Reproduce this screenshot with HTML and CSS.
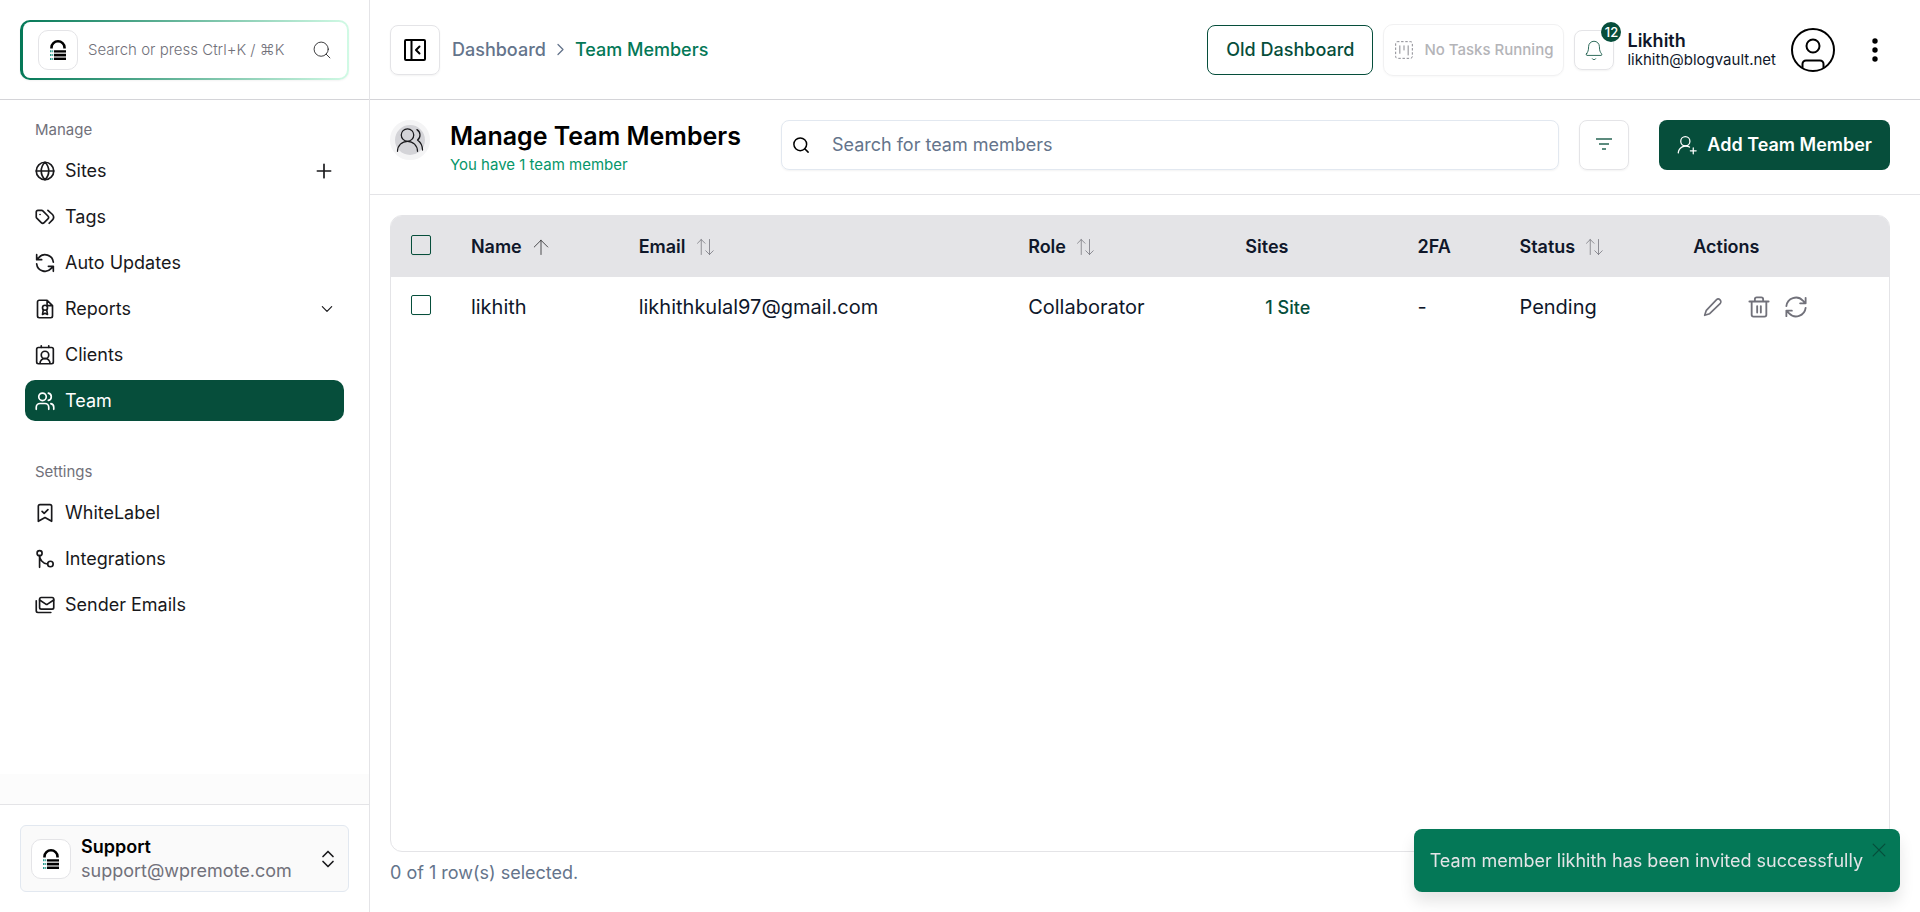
FILE: index.html
```html
<!DOCTYPE html>
<html lang="en">
<head>
    <meta charset="UTF-8">
    <meta name="viewport" content="width=device-width, initial-scale=1.0">
    <title>Team Members</title>
    <link rel="stylesheet" href="styles.css">
</head>
<body>
    <!-- shared icons -->
    <svg class="sprite" aria-hidden="true">
        <symbol id="logo" viewBox="0 0 16 20">
            <path d="M1.500 8.500V7.500a6.500 6.200 0 0 1 13 0v1" fill="none" stroke="#000" stroke-width="2.600" stroke-linecap="butt" />
            <path d="M4 12.500h12v5.500H4z" fill="#bbb" />
            <path d="M4 10.200h12v2.300H4zM4 14h12v2.300H4zM4 17.700h12V20H4z" fill="#000" />
            <path d="M0 10.200h1.500v2H0zM2.200 10.200h1v2h-1zM0 14h1.500v2H0zM2.200 14h1v2h-1zM0 18h1.500v2H0zM2.200 18h1v2h-1z" fill="#2a9d8f" />
        </symbol>
        <symbol id="search" viewBox="0 0 24 24"><circle cx="11" cy="11" r="8.500" /><path d="m21.500 21.500-4.500-4.500" /></symbol>
        <symbol id="sort" viewBox="0 0 24 24"><path d="M7 22V2M2 7l5-5 5 5M18 2v20M13 17l5 5 5-5" /></symbol>
    </svg>

    <div class="app">
        <aside class="sidebar">
            <div class="sidebar-top">
                <button type="button" class="command">
                    <span class="logo"><svg><use href="#logo" /></svg></span>
                    <span class="command-text">Search or press Ctrl+K / ⌘K</span>
                    <svg class="icon thin"><use href="#search" /></svg>
                </button>
            </div>

            <nav class="menu">
                <h2>Manage</h2>
                <ul>
                    <li>
                        <a href="#">
                            <svg class="icon" viewBox="0 0 24 24"><circle cx="12" cy="12" r="10.500" /><path d="M1.500 12h21M12 1.500c-6 6-6 15 0 21M12 1.500c6 6 6 15 0 21" /></svg>
                            Sites
                            <svg class="icon end" viewBox="0 0 24 24"><path d="M4 12h16M12 4v16" /></svg>
                        </a>
                    </li>
                    <li>
                        <a href="#">
                            <svg class="icon" viewBox="0 0 24 24"><path d="M1.500 6v6a2 2 0 0 0 .6 1.400l5.400 5.400a2.500 2.500 0 0 0 3.500 0l4.500-4.500a2.500 2.500 0 0 0 0-3.500L9.400 4.600A2 2 0 0 0 8 4H3.500a2 2 0 0 0-2 2zM17 19.500l4-4a5 5 0 0 0 0-6.500L15.500 4M6 9h.1" /></svg>
                            Tags
                        </a>
                    </li>
                    <li>
                        <a href="#">
                            <svg class="icon" viewBox="0 0 24 24"><path d="M22 11A10 10 0 0 0 4.500 5.500L2 8M2 2v6h6M2 13a10 10 0 0 0 17.500 5.500L22 16M16 16h6v6" /></svg>
                            Auto Updates
                        </a>
                    </li>
                    <li>
                        <a href="#">
                            <svg class="icon" viewBox="0 0 24 24"><path d="M14.500 1.500H5a2 2 0 0 0-2 2v17a2 2 0 0 0 2 2h14a2 2 0 0 0 2-2V8zM14.500 1.500V8H21" /><circle cx="12" cy="10.500" r="3" /><path d="M10 13l-1 5.500 3-1.500 3 1.500-1-5.500" /></svg>
                            Reports
                            <svg class="icon end small" viewBox="0 0 24 24"><path d="m4 8 8 8 8-8" /></svg>
                        </a>
                    </li>
                    <li>
                        <a href="#">
                            <svg class="icon" viewBox="0 0 24 24"><rect x="2" y="3" width="20" height="19.500" rx="2" /><path d="M7.500 1v2M16.500 1v2M6 22a6 6 0 0 1 12 0" /><circle cx="12" cy="12" r="4.500" /></svg>
                            Clients
                        </a>
                    </li>
                    <li>
                        <a href="#" class="active" aria-current="page">
                            <svg class="icon" viewBox="0 0 24 24"><path d="M16.500 22v-2.500a4.500 4.500 0 0 0-4.500-4.500H6a4.500 4.500 0 0 0-4.500 4.500V22M22.500 22v-2.500a4.500 4.500 0 0 0-3.500-4.400M16 2.500a4.500 4.500 0 0 1 0 8.800" /><circle cx="9" cy="7" r="4.500" /></svg>
                            Team
                        </a>
                    </li>
                </ul>
                <h2>Settings</h2>
                <ul>
                    <li>
                        <a href="#">
                            <svg class="icon" viewBox="0 0 24 24"><path d="M20 22l-8-4.500L4 22V4a2 2 0 0 1 2-2h12a2 2 0 0 1 2 2zM8.500 10l2.500 2.500L15.500 8" /></svg>
                            WhiteLabel
                        </a>
                    </li>
                    <li>
                        <a href="#">
                            <svg class="icon" viewBox="0 0 24 24"><circle cx="5.500" cy="5" r="3" /><circle cx="18.500" cy="18" r="3.300" /><path d="M5.500 22V8c0 4 3.500 9.500 9.500 10" /></svg>
                            Integrations
                        </a>
                    </li>
                    <li>
                        <a href="#">
                            <svg class="icon" viewBox="0 0 24 24"><rect x="5.500" y="3" width="17" height="14" rx="2" /><path d="m5.500 6 7.500 5a2 2 0 0 0 2 0l7.500-5M1.500 7v12a2 2 0 0 0 2 2H19" /></svg>
                            Sender Emails
                        </a>
                    </li>
                </ul>
            </nav>

            <div class="sidebar-fade"></div>
            <div class="sidebar-bottom">
                <button type="button" class="support">
                    <span class="logo"><svg><use href="#logo" /></svg></span>
                    <span class="support-text">
                        <strong>Support</strong>
                        <span>support@wpremote.com</span>
                    </span>
                    <svg class="icon" viewBox="0 0 24 24"><path d="m6 9 6-6 6 6M6 15l6 6 6-6" /></svg>
                </button>
            </div>
        </aside>

        <main>
            <header class="topbar">
                <button type="button" class="square" aria-label="Collapse sidebar">
                    <svg class="panel-icon" viewBox="0 0 24 24"><rect x="2" y="2" width="20" height="20" rx="1" /><path d="M8.500 2v20M16.500 8.500 13 12l3.500 3.500" /></svg>
                </button>
                <nav class="breadcrumb" aria-label="Breadcrumb">
                    <a href="#">Dashboard</a>
                    <svg class="chevron" viewBox="0 0 24 24"><path d="m8 4 8 8-8 8" /></svg>
                    <a href="#" class="current">Team Members</a>
                </nav>
                <button type="button" class="old-dashboard">Old Dashboard</button>
                <button type="button" class="tasks" disabled>
                    <svg class="icon" viewBox="0 0 24 24"><rect x="2" y="2" width="20" height="20" rx="2" stroke-dasharray="2 3" /><path d="M7 7v9M12 7v5M17 7v11" /></svg>
                    No Tasks Running
                </button>
                <button type="button" class="bell" aria-label="Notifications">
                    <svg class="bell-icon" viewBox="0 0 24 24"><path d="M10 22.500a2.200 2.200 0 0 0 4 0M3 16.500A1.200 1.200 0 0 0 3.500 18.500h17a1.200 1.200 0 0 0 .5-2C19.500 14.500 18.500 13 18.500 8a6.500 6.500 0 0 0-13 0c0 5-1 6.500-2.500 8.500z" /></svg>
                    <span class="badge">12</span>
                </button>
                <div class="user">
                    <strong>Likhith</strong>
                    <span>likhith@blogvault.net</span>
                </div>
                <svg class="avatar" viewBox="0 0 44 44"><circle cx="22" cy="22" r="21" /><circle cx="22" cy="18" r="6.500" /><path d="M11.500 39.500V36a3.500 3.500 0 0 1 3.500-3.500h14a3.500 3.500 0 0 1 3.500 3.500v3.500" /></svg>
                <button type="button" class="more" aria-label="More">
                    <svg viewBox="0 0 6 24"><circle cx="3" cy="3" r="2.700" /><circle cx="3" cy="12" r="2.700" /><circle cx="3" cy="21" r="2.700" /></svg>
                </button>
            </header>

            <section class="page-head">
                <span class="page-icon">
                    <svg viewBox="0 0 24 24"><path d="M18 21a8 8 0 0 0-16 0M22 20c0-3.370-2-6.500-4-8a5 5 0 0 0-.45-8.300" /><circle cx="10" cy="8" r="5" /></svg>
                </span>
                <div class="page-title">
                    <h1>Manage Team Members</h1>
                    <p>You have 1 team member</p>
                </div>
                <div class="search">
                    <svg class="search-icon"><use href="#search" /></svg>
                    <input type="search" placeholder="Search for team members" aria-label="Search for team members">
                </div>
                <button type="button" class="square" aria-label="Filter">
                    <svg class="filter-icon" viewBox="0 0 24 24"><path d="M4 6h16M7 11h10M10 16h4" /></svg>
                </button>
                <button type="button" class="add">
                    <svg class="icon" viewBox="0 0 24 24"><path d="M1.500 21.500a9 9 0 0 1 13.500-7M19.500 15.500v7M23 19h-7" /><circle cx="10" cy="7.500" r="5.500" /></svg>
                    Add Team Member
                </button>
            </section>

            <section class="content">
                <div class="table-box">
                    <table>
                        <colgroup>
                            <col class="col-check">
                            <col class="col-name">
                            <col class="col-email">
                            <col class="col-role">
                            <col class="col-sites">
                            <col class="col-2fa">
                            <col class="col-status">
                            <col>
                        </colgroup>
                        <thead>
                            <tr>
                                <th><input type="checkbox" aria-label="Select all"></th>
                                <th><button type="button" class="sort sorted">Name <svg viewBox="0 0 24 24"><path d="M12 22V3M3 12l9-9 9 9" /></svg></button></th>
                                <th><button type="button" class="sort">Email <svg><use href="#sort" /></svg></button></th>
                                <th><button type="button" class="sort">Role <svg><use href="#sort" /></svg></button></th>
                                <th>Sites</th>
                                <th>2FA</th>
                                <th><button type="button" class="sort">Status <svg><use href="#sort" /></svg></button></th>
                                <th>Actions</th>
                            </tr>
                        </thead>
                        <tbody>
                            <tr>
                                <td><input type="checkbox" aria-label="Select likhith"></td>
                                <td>likhith</td>
                                <td>likhithkulal97@gmail.com</td>
                                <td>Collaborator</td>
                                <td><a href="#" class="site-link">1 Site</a></td>
                                <td>-</td>
                                <td>Pending</td>
                                <td>
                                    <div class="actions">
                                        <button type="button" class="edit" aria-label="Edit"><svg viewBox="0 0 24 24"><path d="M16 3.500a3 3 0 0 1 4.500 4.500L8 20l-6 2 2-6z" /></svg></button>
                                        <button type="button" aria-label="Delete"><svg viewBox="0 0 24 24"><path d="M1.500 6h21M4 6v14.500a2 2 0 0 0 2 2h12a2 2 0 0 0 2-2V6M7.500 6V3.500a2 2 0 0 1 2-2h5a2 2 0 0 1 2 2V6M10 11v7M14 11v7" /></svg></button>
                                        <button type="button" aria-label="Resend invite"><svg viewBox="0 0 24 24"><path d="M1.500 11A10.500 10.500 0 0 1 19.500 5l3 3M22.500 2v6h-6M22.500 13a10.500 10.500 0 0 1-18 6l-3-3M1.500 22v-6h6" /></svg></button>
                                    </div>
                                </td>
                            </tr>
                        </tbody>
                    </table>
                </div>
                <p class="selected">0 of 1 row(s) selected.</p>
            </section>
        </main>
    </div>

    <div class="toast" role="status">
        Team member likhith has been invited successfully
        <button type="button" class="toast-close" aria-label="Close"><svg viewBox="0 0 24 24"><path d="m5 5 14 14M19 5 5 19" /></svg></button>
    </div>
</body>
</html>
```
FILE: styles.css
```css
* {
    box-sizing: border-box;
}
body {
    margin: 0;
    font-family: Inter, "Liberation Sans", sans-serif;
    font-size: 18px;
    line-height: 24px;
    color: #0f172a;
    background: white;
}
h1, h2, p, ul {
    margin: 0;
    padding: 0;
}
ul {
    list-style: none;
}
a {
    color: inherit;
    text-decoration: none;
}
button {
    font: inherit;
    color: inherit;
    background: none;
    border: none;
    padding: 0;
    cursor: pointer;
}
svg {
    fill: none;
    stroke: currentColor;
    stroke-width: 2;
    stroke-linecap: round;
    stroke-linejoin: round;
    flex-shrink: 0;
}
.sprite {
    display: none;
}
.icon {
    width: 20px;
    height: 20px;
}
.app {
    display: flex;
    height: 100vh;
}

/* sidebar */
.sidebar {
    width: 370px;
    flex-shrink: 0;
    display: flex;
    flex-direction: column;
    border-right: 1px solid #e4e4e7;
    color: #18181b;
}
.sidebar-top {
    height: 100px;
    padding: 20px;
    border-bottom: 1px solid #d4d4d8;
}
.command {
    width: 100%;
    height: 60px;
    display: flex;
    align-items: center;
    gap: 10px;
    padding: 0 15px;
    border: 2px solid transparent;
    border-left-width: 3px;
    border-radius: 10px;
    background: linear-gradient(white, white) padding-box, linear-gradient(to right, #047857, #d1fae5) border-box;
    box-shadow: 0 1px 2px rgba(0, 0, 0, 0.05);
}
.command-text {
    flex: 1;
    text-align: left;
    font-size: 15px;
    font-weight: 300;
    color: #71717a;
}
.thin {
    stroke-width: 1;
    color: #18181b;
}
.logo {
    width: 40px;
    height: 40px;
    flex-shrink: 0;
    display: flex;
    align-items: center;
    justify-content: center;
    background: white;
    border: 1px solid #e4e4e7;
    border-radius: 10px;
}
.logo svg {
    width: 16px;
    height: 20px;
    stroke: none;
}
.menu {
    flex: 1;
    padding: 20px 25px 0;
}
.menu h2 {
    margin: 0 10px 10px;
    font-size: 15px;
    font-weight: 400;
    line-height: 20px;
    color: #71717a;
}
.menu ul {
    display: flex;
    flex-direction: column;
    gap: 5px;
    margin-bottom: 41px;
}
.menu a {
    height: 41px;
    display: flex;
    align-items: center;
    gap: 10px;
    padding: 0 10px;
    border-radius: 10px;
}
.menu a.active {
    background: #064e3b;
    color: white;
}
.menu .end {
    margin-left: auto;
}
.menu .small {
    width: 14px;
    height: 14px;
}
.sidebar-fade {
    height: 30px;
    background: #fcfcfc;
}
.sidebar-bottom {
    padding: 20px;
    border-top: 1px solid #e4e4e7;
}
.support {
    width: 100%;
    height: 67px;
    display: flex;
    align-items: center;
    gap: 10px;
    padding: 0 10px;
    border: 1px solid #e2e8f0;
    border-radius: 6px;
    background: #fafafa;
}
.support-text {
    flex: 1;
    display: flex;
    flex-direction: column;
    text-align: left;
    color: #71717a;
}
.support-text strong {
    font-weight: 600;
    color: black;
}

/* top bar */
main {
    flex: 1;
    min-width: 0;
    display: flex;
    flex-direction: column;
}
.topbar {
    height: 100px;
    display: flex;
    align-items: center;
    gap: 10px;
    padding: 0 20px;
    border-bottom: 1px solid #d4d4d8;
}
.square {
    width: 50px;
    height: 50px;
    flex-shrink: 0;
    display: flex;
    align-items: center;
    justify-content: center;
    border: 1px solid #e4e4e7;
    border-radius: 8px;
    box-shadow: 0 1px 2px rgba(0, 0, 0, 0.05);
}
.panel-icon {
    width: 24px;
    height: 24px;
    color: black;
}
.breadcrumb {
    flex: 1;
    display: flex;
    align-items: center;
    gap: 7px;
    margin-left: 2px;
    font-weight: 500;
    color: #64748b;
}
.breadcrumb .current {
    color: #047857;
}
.chevron {
    width: 15px;
    height: 15px;
}
.old-dashboard {
    height: 50px;
    padding: 0 18px;
    border: 1px solid #064e3b;
    border-radius: 8px;
    font-weight: 500;
    color: #064e3b;
}
.tasks {
    height: 52px;
    display: flex;
    align-items: center;
    gap: 10px;
    padding: 0 10px;
    border: 1px solid #f1f1f2;
    border-radius: 10px;
    font-size: 15px;
    font-weight: 500;
    color: #b4b4b8;
    box-shadow: 0 1px 2px rgba(0, 0, 0, 0.03);
}
.tasks .icon {
    stroke-width: 1;
    color: #71717a;
}
.bell {
    position: relative;
    width: 40px;
    height: 40px;
    display: flex;
    align-items: center;
    justify-content: center;
    border: 1px solid #e4e4e7;
    border-radius: 8px;
    color: #064e3b;
    box-shadow: 0 1px 2px rgba(0, 0, 0, 0.05);
}
.bell-icon {
    width: 20px;
    height: 20px;
    stroke-width: 1;
}
.badge {
    position: absolute;
    top: -9px;
    right: -8px;
    width: 20px;
    height: 20px;
    border-radius: 50%;
    background: #064e3b;
    color: white;
    font-size: 13px;
    font-weight: 500;
    line-height: 20px;
}
.user {
    display: flex;
    flex-direction: column;
    margin: 0 5px 0 3px;
    font-size: 15px;
    line-height: 19px;
}
.user strong {
    font-size: 18px;
    font-weight: 600;
}
.avatar {
    width: 44px;
    height: 44px;
    color: black;
}
.more {
    width: 50px;
    height: 50px;
    margin-left: 5px;
}
.more svg {
    width: 6px;
    height: 24px;
    fill: black;
    stroke: none;
    vertical-align: middle;
}

/* page header */
.page-head {
    display: flex;
    height: 95px;
    padding: 20px 30px 0 20px;
    border-bottom: 1px solid #e4e4e7;
}
.page-icon {
    width: 40px;
    height: 40px;
    display: flex;
    align-items: center;
    justify-content: center;
    border: 5px solid #f4f4f5;
    border-radius: 50%;
    background: #d4d4d8;
    color: #18181b;
}
.page-icon svg {
    width: 30px;
    height: 30px;
    stroke-width: 1;
}
.page-title {
    margin: 0 40px 0 20px;
}
.page-title h1 {
    font-size: 25px;
    font-weight: 600;
    line-height: 32px;
    color: black;
}
.page-title p {
    font-size: 15px;
    line-height: 26px;
    color: #059669;
}
.search {
    flex: 1;
    height: 50px;
    display: flex;
    align-items: center;
    gap: 10px;
    padding: 0 10px;
    margin-right: 20px;
    border: 1px solid #e2e8f0;
    border-radius: 8px;
    box-shadow: 0 1px 2px rgba(0, 0, 0, 0.05);
}
.search-icon {
    width: 18px;
    height: 18px;
    color: black;
}
.search input {
    flex: 1;
    padding: 0 12px;
    border: none;
    outline: none;
    font: inherit;
}
.search input::placeholder {
    color: #64748b;
}
.filter-icon {
    width: 24px;
    height: 24px;
    stroke-linecap: butt;
    color: #5c8b7e;
}
.add {
    height: 50px;
    display: flex;
    align-items: center;
    gap: 10px;
    margin-left: 30px;
    padding: 0 18px;
    border-radius: 8px;
    background: #064e3b;
    color: white;
    font-weight: 600;
}
.add .icon {
    stroke-width: 1.5;
}

/* members table */
.content {
    flex: 1;
    display: flex;
    flex-direction: column;
    padding: 20px 30px 0 20px;
}
.table-box {
    flex: 1;
    border: 1px solid #e4e4e7;
    border-radius: 12px;
    overflow: hidden;
}
table {
    width: 100%;
    table-layout: fixed;
    border-collapse: collapse;
    font-size: 20px;
}
.col-check {
    width: 4%;
}
.col-name {
    width: 11.2%;
}
.col-email {
    width: 26%;
}
.col-role {
    width: 14.5%;
}
.col-sites {
    width: 11.5%;
}
.col-2fa {
    width: 6.8%;
}
.col-status {
    width: 11.6%;
}
th, td {
    height: 60px;
    padding: 0 20px;
    text-align: left;
    vertical-align: middle;
}
th {
    height: 61px;
    background: #e4e4e7;
    font-size: 18px;
    font-weight: 600;
}
input[type="checkbox"] {
    appearance: none;
    display: block;
    width: 20px;
    height: 20px;
    margin: 0 0 4px;
    border: 1px solid #064e3b;
    border-radius: 2px;
    box-shadow: 0 1px 2px rgba(0, 0, 0, 0.05);
}
.sort {
    display: flex;
    align-items: center;
    gap: 10px;
}
.sort svg {
    width: 18px;
    height: 18px;
    stroke-width: 1;
    color: #71717a;
}
.sort.sorted svg {
    color: #18181b;
}
.site-link {
    padding: 0 20px;
    font-size: 18px;
    font-weight: 500;
    color: #064e3b;
}
.actions {
    display: flex;
    align-items: center;
    gap: 15px;
    padding-left: 10px;
    color: #71717a;
}
.actions svg {
    display: block;
    width: 22px;
    height: 22px;
}
.actions .edit {
    margin-right: 10px;
}
.actions .edit svg {
    width: 20px;
    height: 20px;
}
.selected {
    padding: 9px 0 27px;
    color: #64748b;
}

/* toast */
.toast {
    position: fixed;
    right: 20px;
    bottom: 20px;
    padding: 20px 37px 20px 16px;
    border-radius: 8px;
    background: #047857;
    color: #e4e4e7;
    line-height: 23px;
    box-shadow: 0 10px 15px rgba(0, 0, 0, 0.1);
}
.toast-close {
    position: absolute;
    top: 11px;
    right: 11px;
}
.toast-close svg {
    display: block;
    width: 20px;
    height: 20px;
    stroke-width: 1.5;
    color: #064e3b;
}
```
